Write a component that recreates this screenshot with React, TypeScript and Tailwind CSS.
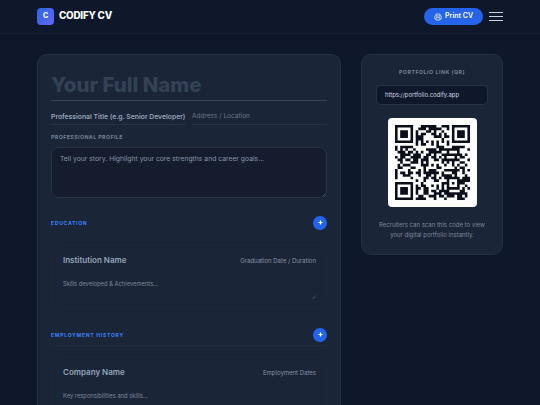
function makeQR(text: string, forced: number): boolean[][] {
  const size = 29;
  const bytes = Array.from(new TextEncoder().encode(text));
  const bits: number[] = [];
  const push = (v: number, n: number) => { for (let i = n - 1; i >= 0; i--) bits.push((v >> i) & 1); };
  push(4, 4);
  push(bytes.length, 8);
  bytes.forEach((b) => push(b, 8));
  push(0, Math.min(4, 352 - bits.length));
  while (bits.length % 8) bits.push(0);
  const data: number[] = [];
  for (let i = 0; i < bits.length; i += 8) data.push(parseInt(bits.slice(i, i + 8).join(""), 2));
  for (let p = 0xec; data.length < 44; p ^= 0xec ^ 0x11) data.push(p);
  const mul = (a: number, b: number) => {
    let r = 0;
    for (let i = 7; i >= 0; i--) { r = (r << 1) ^ ((r >> 7) * 0x11d); r ^= ((b >> i) & 1) * a; }
    return r & 255;
  };
  const deg = 26;
  const gen = new Array(deg).fill(0);
  gen[deg - 1] = 1;
  let root = 1;
  for (let i = 0; i < deg; i++) {
    for (let j = 0; j < deg; j++) { gen[j] = mul(gen[j], root); if (j + 1 < deg) gen[j] ^= gen[j + 1]; }
    root = mul(root, 2);
  }
  const ec = new Array(deg).fill(0);
  data.forEach((b) => {
    const f = b ^ ec.shift();
    ec.push(0);
    gen.forEach((g, i) => { ec[i] ^= mul(g, f); });
  });
  const all = data.concat(ec);
  const mod = Array.from({ length: size }, () => new Array(size).fill(false));
  const fn = Array.from({ length: size }, () => new Array(size).fill(false));
  const set = (x: number, y: number, v: boolean) => { mod[y][x] = v; fn[y][x] = true; };
  for (let i = 0; i < size; i++) { set(6, i, i % 2 === 0); set(i, 6, i % 2 === 0); }
  const finder = (cx: number, cy: number) => {
    for (let dy = -4; dy <= 4; dy++) for (let dx = -4; dx <= 4; dx++) {
      const d = Math.max(Math.abs(dx), Math.abs(dy));
      const x = cx + dx, y = cy + dy;
      if (x >= 0 && x < size && y >= 0 && y < size) set(x, y, d !== 2 && d !== 4);
    }
  };
  finder(3, 3); finder(size - 4, 3); finder(3, size - 4);
  for (let dy = -2; dy <= 2; dy++) for (let dx = -2; dx <= 2; dx++) set(22 + dx, 22 + dy, Math.max(Math.abs(dx), Math.abs(dy)) !== 1);
  const format = (mask: number) => {
    const d = mask;
    let rem = d;
    for (let i = 0; i < 10; i++) rem = (rem << 1) ^ ((rem >> 9) * 0x537);
    const f = ((d << 10) | rem) ^ 0x5412;
    const b = (i: number) => ((f >> i) & 1) === 1;
    for (let i = 0; i <= 5; i++) set(8, i, b(i));
    set(8, 7, b(6)); set(8, 8, b(7)); set(7, 8, b(8));
    for (let i = 9; i < 15; i++) set(14 - i, 8, b(i));
    for (let i = 0; i < 8; i++) set(size - 1 - i, 8, b(i));
    for (let i = 8; i < 15; i++) set(8, size - 15 + i, b(i));
    set(8, size - 8, true);
  };
  format(0);
  let k = 0;
  for (let right = size - 1; right >= 1; right -= 2) {
    if (right === 6) right = 5;
    for (let v = 0; v < size; v++) for (let j = 0; j < 2; j++) {
      const x = right - j;
      const y = ((right + 1) & 2) === 0 ? size - 1 - v : v;
      if (!fn[y][x] && k < all.length * 8) { mod[y][x] = ((all[k >> 3] >> (7 - (k & 7))) & 1) === 1; k++; }
    }
  }
  const maskFn = (m: number, x: number, y: number) => [
    (x + y) % 2, y % 2, x % 3, (x + y) % 3, ((x / 3 | 0) + (y / 2 | 0)) % 2,
    (x * y) % 2 + (x * y) % 3, ((x * y) % 2 + (x * y) % 3) % 2, ((x + y) % 2 + (x * y) % 3) % 2,
  ][m] === 0;
  for (let y = 0; y < size; y++) for (let x = 0; x < size; x++) if (!fn[y][x] && maskFn(forced, x, y)) mod[y][x] = !mod[y][x];
  format(forced);
  return mod;
}

function QRCode() {
  const m = makeQR("https://portfolio.codify.app", 2);
  let d = "";
  m.forEach((row, y) => row.forEach((c, x) => { if (c) d += `M${x} ${y}h1v1h-1z`; }));
  return (
    <svg width="75" height="75" viewBox="0 0 29 29"><path d={d} fill="#0b0f1a" /></svg>
  );
}

function Plus() {
  return (
    <div className="flex h-[14px] w-[14px] items-center justify-center rounded-full bg-[#2563eb]">
      <svg width="5" height="5" viewBox="0 0 10 10"><path d="M5 1v8M1 5h8" stroke="#fff" strokeWidth="2.4" /></svg>
    </div>
  );
}

function Grip({ className }: { className: string }) {
  return (
    <svg className={className} width="4" height="4" viewBox="0 0 8 8"><path d="M1 7 7 1M4.5 7 7 4.5" stroke="#64748b" strokeWidth="1" /></svg>
  );
}

function Entry({ title, date, desc }: { title: string; date: string; desc: string }) {
  return (
    <div className="relative ml-[1px] h-[64px] rounded-[8px] border border-[#1d2839] bg-[#1a2537] px-[10px] pt-[9px]">
      <div className="flex h-[11px] items-center justify-between">
        <span className="text-[8px] font-semibold text-[#94a3b8]">{title}</span>
        <span className="text-[6px] text-[#8793a6]">{date}</span>
      </div>
      <div className="mt-[14px] text-[5.8px] leading-[8px] text-[#7c889b]">{desc}</div>
      <Grip className="absolute bottom-[9px] right-[10px]" />
    </div>
  );
}

function SectionHead({ label, border }: { label: string; border?: boolean }) {
  return (
    <div className={`flex items-center justify-between pb-[3px] ${border ? "border-b border-[#1e2a3d]" : ""}`}>
      <span className="pt-[2px] text-[5.1px] font-bold tracking-[0.7px] text-[#3b82f6]">{label}</span>
      <Plus />
    </div>
  );
}

export default function App() {
  return (
    <div className="h-[405px] w-[540px] overflow-hidden bg-[#0f172a] font-['Inter',sans-serif]">
      <header className="flex h-[34px] items-center justify-between border-b border-[#162033] bg-[#0f172a] pl-[37px] pr-[37px]">
        <div className="flex items-center gap-[5px]">
          <div className="flex h-[17px] w-[17px] items-center justify-center rounded-[4px] bg-gradient-to-br from-[#2563eb] to-[#6366f1] text-[7px] font-extrabold text-white">C</div>
          <span className="text-[9.8px] font-extrabold tracking-[-0.2px] text-white">CODIFY CV</span>
        </div>
        <div className="flex items-center gap-[6px]">
          <div className="flex h-[17px] w-[59px] items-center justify-center gap-[3px] rounded-full bg-[#2563eb] text-[7px] font-semibold text-white">
            <svg width="8" height="8" viewBox="0 0 24 24" fill="none" stroke="#fff" strokeWidth="2"><path d="M6 9V3h12v6" /><path d="M6 18H4a2 2 0 0 1-2-2v-5a2 2 0 0 1 2-2h16a2 2 0 0 1 2 2v5a2 2 0 0 1-2 2h-2" /><path d="M6 14h12v7H6z" /></svg>
            Print CV
          </div>
          <div className="flex w-[14px] flex-col gap-[3px]">
            <span className="h-[1px] bg-[#cbd5e1]" />
            <span className="h-[1px] bg-[#cbd5e1]" />
            <span className="h-[1px] bg-[#cbd5e1]" />
          </div>
        </div>
      </header>
      <main className="flex items-start gap-[20px] px-[37px] pt-[20px]">
        <section className="h-[400px] w-[304px] shrink-0 rounded-[10px] border border-[#243044] bg-[#1a2537] px-[13px] pt-[16px]">
          <div className="border-b border-[#334155] pb-[2px] text-[20.4px] font-extrabold leading-[27px] text-[#334155]">Your Full Name</div>
          <div className="mt-[9px] flex gap-[6px]">
            <div className="w-[135px] whitespace-nowrap border-b border-[#263245] pb-[1px] text-[6.8px] font-semibold leading-[13px] text-[#94a3b8]">Professional Title (e.g. Senior Developer)</div>
            <div className="flex-1 border-b border-[#263245] pb-[1px] text-[6.5px] leading-[13px] text-[#6b7789]">Address / Location</div>
          </div>
          <div className="mt-[9px] text-[5.3px] font-bold tracking-[0.4px] text-[#718096]">PROFESSIONAL PROFILE</div>
          <div className="relative mt-[5px] h-[51px] rounded-[8px] border border-[#263245] bg-[#151c2e] px-[8px] pt-[6px] text-[6.8px] leading-[10px] text-[#8793a6]">
            Tell your story. Highlight your core strengths and career goals...
            <Grip className="absolute bottom-0 right-0" />
          </div>
          <div className="mt-[18px]"><SectionHead label="EDUCATION" /></div>
          <div className="mt-[12px]"><Entry title="Institution Name" date="Graduation Date / Duration" desc="Skills developed & Achievements..." /></div>
          <div className="mt-[19px]"><SectionHead label="EMPLOYMENT HISTORY" border /></div>
          <div className="mt-[11px]"><Entry title="Company Name" date="Employment Dates" desc="Key responsibilities and skills..." /></div>
        </section>
        <aside className="flex h-[201px] w-[142px] shrink-0 flex-col items-center rounded-[10px] border border-[#243044] bg-[#1a2537] px-[14px] pt-[14px]">
          <div className="text-[5.3px] font-bold tracking-[0.5px] text-[#718096]">PORTFOLIO LINK (QR)</div>
          <div className="mt-[8px] h-[20px] w-full rounded-[5px] border border-[#263245] bg-[#0f172a] pl-[8px] text-[5.9px] leading-[18px] text-[#cbd5e1]">https://portfolio.codify.app</div>
          <div className="mt-[13px] grid h-[89px] w-[89px] place-items-center rounded-[4px] bg-white">
            <QRCode />
          </div>
          <p className="mt-[13px] text-center text-[6px] leading-[10px] text-[#7c889b]">Recruiters can scan this code to view your digital portfolio instantly.</p>
        </aside>
      </main>
    </div>
  );
}
